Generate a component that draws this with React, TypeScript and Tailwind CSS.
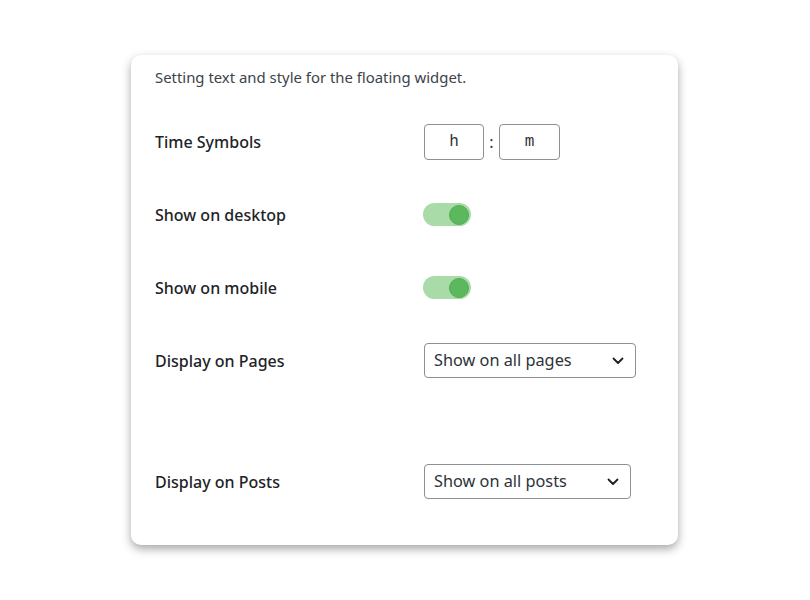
import React from "react";

const Toggle = () => (
  <div className="relative ml-[-1px] w-[48px] h-[23px] rounded-full bg-[#a8dba8]">
    <div className="absolute right-[2px] top-[1.5px] w-[20px] h-[20px] rounded-full bg-[#5cb85c] border border-[#53ad53]" />
  </div>
);

const Chevron = () => (
  <svg width="12" height="8" viewBox="0 0 12 8" fill="none">
    <path d="M1.5 1.5 L6 6 L10.5 1.5" stroke="#1e1e1e" strokeWidth="1.8" strokeLinecap="round" strokeLinejoin="round" />
  </svg>
);

const Select = ({ text, w }: { text: string; w: string }) => (
  <div className={`${w} h-[35px] border border-[#8c8f94] rounded-[4px] flex items-center justify-between pl-[9px] pr-[11px] text-[16.3px] text-[#2c3338]`}>
    <span>{text}</span>
    <Chevron />
  </div>
);

export default function App() {
  return (
    <div
      className="w-[810px] h-[600px] bg-white pt-[55px] pl-[131px]"
      style={{ fontFamily: '"Noto Sans", "Open Sans", sans-serif' }}
    >
      <div className="w-[547px] h-[490px] bg-white rounded-[10px] shadow-[0_4px_10px_rgba(0,0,0,0.35)] pl-[24px] pt-[12px]">
        <p className="text-[14.9px] leading-[20px] text-[#3c434a]">
          Setting text and style for the floating widget.
        </p>
        <div className="mt-[18px] grid grid-cols-[269px_1fr] text-[16px] font-medium text-[#1d2327]">
          <div className="h-[73px] flex items-center">Time Symbols</div>
          <div className="h-[73px] flex items-center">
            <div className="w-[60px] h-[36px] border border-[#8c8f94] rounded-[4px] flex items-center justify-center font-normal text-[#2c3338] text-[16px]" style={{ fontFamily: '"Liberation Mono", monospace' }}>h</div>
            <span className="w-[15px] text-center font-normal text-[#2c3338]">:</span>
            <div className="w-[61px] h-[36px] border border-[#8c8f94] rounded-[4px] flex items-center justify-center font-normal text-[#2c3338] text-[16px]" style={{ fontFamily: '"Liberation Mono", monospace' }}>m</div>
          </div>
          <div className="h-[73px] flex items-center">Show on desktop</div>
          <div className="h-[73px] flex items-center"><Toggle /></div>
          <div className="h-[73px] flex items-center">Show on mobile</div>
          <div className="h-[73px] flex items-center"><Toggle /></div>
          <div className="h-[73px] flex items-center">Display on Pages</div>
          <div className="h-[73px] flex items-center font-normal"><Select text="Show on all pages" w="w-[212px]" /></div>
          <div className="h-[48px] col-span-2" />
          <div className="h-[73px] flex items-center">Display on Posts</div>
          <div className="h-[73px] flex items-center font-normal"><Select text="Show on all posts" w="w-[207px]" /></div>
        </div>
      </div>
    </div>
  );
}
